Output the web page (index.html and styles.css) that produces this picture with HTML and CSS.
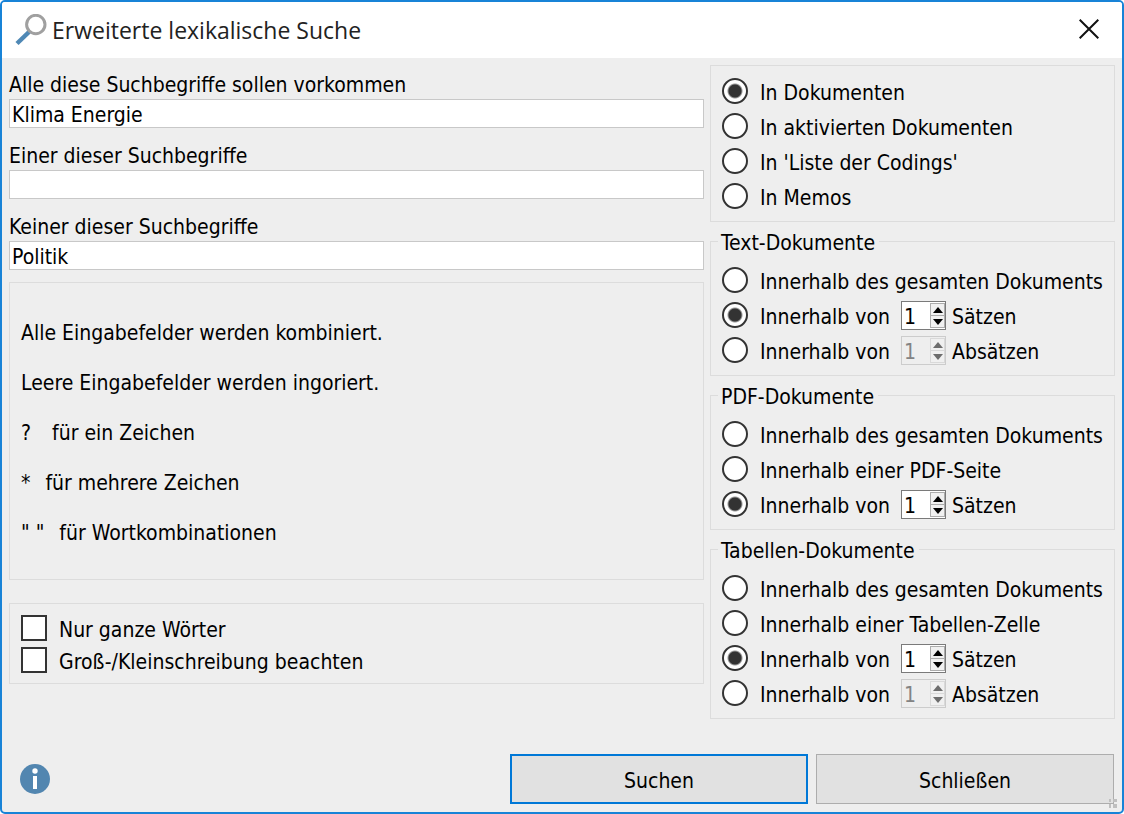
FILE: index.html
```
<!DOCTYPE html>
<html lang="de">
<head>
    <meta charset="UTF-8">
    <meta name="viewport" content="width=device-width, initial-scale=1.0">
    <title>Erweiterte lexikalische Suche</title>
    <link rel="stylesheet" href="styles.css">
</head>
<body>
    <form class="window">
        <header class="titlebar">
            <svg class="title-icon" width="32" height="32" viewBox="0 0 32 32" fill="none">
                <path d="M14.5 17.5L2 29.5" stroke="#4f88b5" stroke-width="4.5"/>
                <circle cx="20.8" cy="10.5" r="9.2" stroke="#a0a0a0" stroke-width="3"/>
            </svg>
            <h1 class="title">Erweiterte lexikalische Suche</h1>
            <button type="button" class="close" aria-label="Schließen">
                <svg width="20" height="20" viewBox="0 0 20 20" fill="none" stroke="#111" stroke-width="2">
                    <path d="M.7 .7L19.3 19.3M19.3 .7L.7 19.3"/>
                </svg>
            </button>
        </header>

        <main class="content">
            <div class="column-left">
                <div class="field">
                    <label for="all">Alle diese Suchbegriffe sollen vorkommen</label>
                    <input type="text" id="all" value="Klima Energie">
                </div>
                <div class="field">
                    <label for="any">Einer dieser Suchbegriffe</label>
                    <input type="text" id="any">
                </div>
                <div class="field">
                    <label for="none">Keiner dieser Suchbegriffe</label>
                    <input type="text" id="none" value="Politik">
                </div>

                <div class="box hints">
                    <p>Alle Eingabefelder werden kombiniert.</p>
                    <p>Leere Eingabefelder werden ingoriert.</p>
                    <p><span class="sign">?</span>   für ein Zeichen</p>
                    <p><span class="sign">*</span>  für mehrere Zeichen</p>
                    <p><span class="sign">" "</span>  für Wortkombinationen</p>
                </div>

                <div class="box checks">
                    <label class="check"><input type="checkbox">Nur ganze Wörter</label>
                    <label class="check"><input type="checkbox">Groß-/Kleinschreibung beachten</label>
                </div>
            </div>

            <div class="column-right">
                <div class="box group" role="radiogroup">
                    <div class="row"><label class="radio"><input type="radio" name="scope" checked>In Dokumenten</label></div>
                    <div class="row"><label class="radio"><input type="radio" name="scope">In aktivierten Dokumenten</label></div>
                    <div class="row"><label class="radio"><input type="radio" name="scope">In 'Liste der Codings'</label></div>
                    <div class="row"><label class="radio"><input type="radio" name="scope">In Memos</label></div>
                </div>

                <fieldset class="box group">
                    <legend>Text-Dokumente</legend>
                    <div class="row"><label class="radio"><input type="radio" name="text">Innerhalb des gesamten Dokuments</label></div>
                    <div class="row">
                        <label class="radio"><input type="radio" name="text" checked>Innerhalb von</label>
                        <span class="spinner">
                            <input type="number" id="text-s" value="1" min="1">
                            <span class="arrows">
                                <button type="button" class="up" aria-label="Mehr"></button>
                                <button type="button" class="down" aria-label="Weniger"></button>
                            </span>
                        </span>
                        <label class="unit" for="text-s">Sätzen</label>
                    </div>
                    <div class="row">
                        <label class="radio"><input type="radio" name="text">Innerhalb von</label>
                        <span class="spinner disabled">
                            <input type="number" id="text-a" value="1" min="1" disabled>
                            <span class="arrows">
                                <button type="button" class="up" aria-label="Mehr" disabled></button>
                                <button type="button" class="down" aria-label="Weniger" disabled></button>
                            </span>
                        </span>
                        <label class="unit" for="text-a">Absätzen</label>
                    </div>
                </fieldset>

                <fieldset class="box group">
                    <legend>PDF-Dokumente</legend>
                    <div class="row"><label class="radio"><input type="radio" name="pdf">Innerhalb des gesamten Dokuments</label></div>
                    <div class="row"><label class="radio"><input type="radio" name="pdf">Innerhalb einer PDF-Seite</label></div>
                    <div class="row">
                        <label class="radio"><input type="radio" name="pdf" checked>Innerhalb von</label>
                        <span class="spinner">
                            <input type="number" id="pdf-s" value="1" min="1">
                            <span class="arrows">
                                <button type="button" class="up" aria-label="Mehr"></button>
                                <button type="button" class="down" aria-label="Weniger"></button>
                            </span>
                        </span>
                        <label class="unit" for="pdf-s">Sätzen</label>
                    </div>
                </fieldset>

                <fieldset class="box group">
                    <legend>Tabellen-Dokumente</legend>
                    <div class="row"><label class="radio"><input type="radio" name="table">Innerhalb des gesamten Dokuments</label></div>
                    <div class="row"><label class="radio"><input type="radio" name="table">Innerhalb einer Tabellen-Zelle</label></div>
                    <div class="row">
                        <label class="radio"><input type="radio" name="table" checked>Innerhalb von</label>
                        <span class="spinner">
                            <input type="number" id="table-s" value="1" min="1">
                            <span class="arrows">
                                <button type="button" class="up" aria-label="Mehr"></button>
                                <button type="button" class="down" aria-label="Weniger"></button>
                            </span>
                        </span>
                        <label class="unit" for="table-s">Sätzen</label>
                    </div>
                    <div class="row">
                        <label class="radio"><input type="radio" name="table">Innerhalb von</label>
                        <span class="spinner disabled">
                            <input type="number" id="table-a" value="1" min="1" disabled>
                            <span class="arrows">
                                <button type="button" class="up" aria-label="Mehr" disabled></button>
                                <button type="button" class="down" aria-label="Weniger" disabled></button>
                            </span>
                        </span>
                        <label class="unit" for="table-a">Absätzen</label>
                    </div>
                </fieldset>
            </div>
        </main>

        <footer class="footer">
            <button type="button" class="info" aria-label="Info">
                <svg width="30" height="30" viewBox="0 0 30 30">
                    <circle cx="15" cy="15" r="15" fill="#5286b0"/>
                    <circle cx="15" cy="7" r="2.7" fill="#fff"/>
                    <rect x="13" y="12" width="4" height="13" fill="#fff"/>
                </svg>
            </button>
            <button type="button" class="button button-primary">Suchen</button>
            <button type="button" class="button">Schließen</button>
        </footer>

        <svg class="grip" width="8" height="9" viewBox="0 0 8 9" fill="#bfbfbf">
            <path d="M0 0h2v3H0zM4 0h4v3H4zM0 5h2v4H0zM4 5h4v4H4z"/>
        </svg>
    </form>
</body>
</html>
```
FILE: styles.css
```
* {
    margin: 0;
    padding: 0;
    box-sizing: border-box;
}

body {
    background-color: #fff;
    color: #000;
    font-family: Tahoma, "DejaVu Sans Condensed", "Noto Sans", sans-serif;
    font-size: 21px;
    line-height: 26px;
}

input,
button {
    font: inherit;
    color: inherit;
}

.window {
    position: relative;
    min-height: 100vh;
    display: flex;
    flex-direction: column;
    background-color: #eee;
    border: 2px solid #1883d7;
    border-radius: 5px;
    overflow: hidden;
}

/* Title bar */
.titlebar {
    display: flex;
    align-items: center;
    height: 56px;
    padding: 0 23px 0 13px;
    background-color: #fff;
}

.title-icon {
    margin-right: 5px;
}

.title {
    flex: 1;
    color: #222;
    font-family: "Segoe UI", "Open Sans", sans-serif;
    font-size: 23px;
    font-weight: normal;
}

.close {
    display: flex;
    padding-bottom: 2px;
    background: none;
    border: none;
}

/* Two columns */
.content {
    display: flex;
    gap: 6px;
    padding: 7px;
}

.column-left {
    flex: 1;
    min-width: 0;
}

.column-right {
    width: 405px;
    display: flex;
    flex-direction: column;
    gap: 7px;
}

.box {
    border: 1px solid #dcdcdc;
}

.field {
    display: flex;
    flex-direction: column;
    gap: 1px;
    padding: 7px 0 8px;
}

.field input {
    width: 100%;
    height: 29px;
    padding: 2px 2px 0;
    background-color: #fff;
    border: 1px solid #c8c8c8;
}

.hints {
    display: flex;
    flex-direction: column;
    gap: 24px;
    margin-top: 4px;
    padding: 37px 11px 33px;
    white-space: pre;
}

.sign {
    margin-right: 3px;
}

.checks {
    display: flex;
    flex-direction: column;
    margin-top: 23px;
    padding: 9px 11px 6px;
}

.check,
.radio {
    display: flex;
    align-items: center;
    gap: 12px;
    padding-top: 2px;
}

.radio {
    min-width: 179px;
}

.check input,
.radio input {
    appearance: none;
    width: 26px;
    height: 26px;
    margin-bottom: 4px;
    background-color: #fff;
    border: 2px solid #333;
}

.radio input {
    border-radius: 50%;
}

.radio input:checked {
    background-image: radial-gradient(circle, #333 6px, #fff 8px);
}

/* Radio groups */
.group {
    padding: 8px 11px 7px;
}

fieldset.group {
    padding-top: 9px;
}

.group legend {
    margin-left: -4px;
    padding: 3px 4px 0 3px;
    line-height: 22px;
}

.row {
    display: flex;
    align-items: center;
    height: 35px;
}

.unit {
    padding-top: 2px;
}

.spinner {
    display: flex;
    width: 45px;
    height: 29px;
    margin-right: 6px;
    padding: 1px 0 1px 1px;
    background-color: #fff;
    border: 1px solid #7a7a7a;
}

.spinner input {
    appearance: textfield;
    flex: 1;
    min-width: 0;
    padding: 2px 0 0 1px;
    background: none;
    border: none;
}

.spinner input::-webkit-inner-spin-button {
    appearance: none;
}

.arrows {
    display: flex;
    flex-direction: column;
    width: 15px;
}

.arrows button {
    flex: 1;
    display: flex;
    align-items: center;
    justify-content: center;
    background-color: #f0f0f0;
    border: 1px solid #acacac;
}

.arrows .down {
    border-top: none;
}

.arrows button::before {
    content: "";
    border: 5px solid transparent;
}

.arrows .up::before {
    border-top: none;
    border-bottom: 6px solid #000;
}

.arrows .down::before {
    border-bottom: none;
    border-top: 6px solid #000;
}

.spinner.disabled {
    color: #838383;
    background-color: #eee;
    border-color: #ccc;
}

.disabled .arrows button {
    border-color: #d9d9d9;
}

.disabled .arrows .up::before {
    border-bottom-color: #6d6d6d;
}

.disabled .arrows .down::before {
    border-top-color: #6d6d6d;
}

/* Footer */
.footer {
    display: flex;
    align-items: center;
    gap: 8px;
    margin-top: auto;
    padding: 8px 8px 8px 18px;
}

.info {
    display: flex;
    margin-right: auto;
    background: none;
    border: none;
    border-radius: 50%;
}

.button {
    width: 298px;
    height: 50px;
    padding-top: 3px;
    background-color: #e1e1e1;
    border: 1px solid #adadad;
}

.button-primary {
    border: 2px solid #0078d7;
}

.grip {
    position: absolute;
    right: 5px;
    bottom: 4px;
}
```
